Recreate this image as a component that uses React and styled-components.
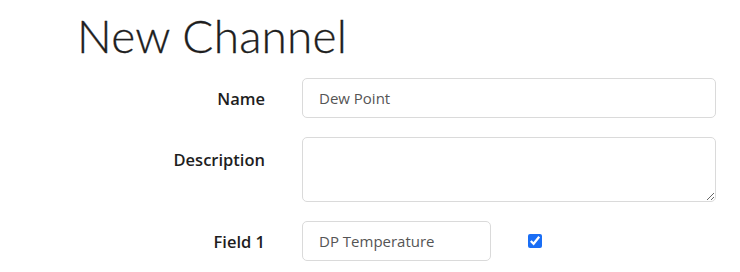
import React, { useState } from "react";
import styled, { createGlobalStyle } from "styled-components";

const GlobalStyle = createGlobalStyle`
  body {
    margin: 0;
    background: #ffffff;
    font-family: "Lato", "Liberation Sans", sans-serif;
    color: #212121;
  }
`;

const Page = styled.div`
  padding: 8px 0 0 0;
`;

const Title = styled.h1`
  margin: 0 0 0 77px;
  font-family: "Lato", sans-serif;
  font-weight: 300;
  font-size: 46px;
  line-height: 56px;
  color: #1e1e1e;
  letter-spacing: 0.2px;
  -webkit-text-stroke: 0.3px #1e1e1e;
`;

const Form = styled.form`
  display: grid;
  grid-template-columns: 265px 414px;
  column-gap: 37px;
  row-gap: 19px;
  margin-top: 14px;
`;

const Label = styled.label`
  text-align: right;
  font-family: "Open Sans", sans-serif;
  font-weight: 600;
  font-size: 16.5px;
  color: #1e1e1e;
  padding-top: ${(p) => (p.top ? "11px" : "0")};
  align-self: ${(p) => (p.top ? "start" : "center")};
`;

const Input = styled.input`
  box-sizing: border-box;
  width: ${(p) => p.w || "100%"};
  height: 40px;
  padding: 0 16px;
  border: 1px solid #dadada;
  border-radius: 5px;
  font-family: "Open Sans", sans-serif;
  font-size: 15px;
  color: #555;
  outline: none;
`;

const TextArea = styled.textarea`
  box-sizing: border-box;
  width: 100%;
  height: 65px;
  padding: 8px 16px;
  border: 1px solid #dadada;
  border-radius: 5px;
  font-family: "Open Sans", sans-serif;
  font-size: 15px;
  color: #555;
  outline: none;
  display: block;
`;

const FieldRow = styled.div`
  display: flex;
  align-items: center;
  gap: 37px;
`;

const Check = styled.input`
  width: 14px;
  height: 14px;
  margin: 0;
  accent-color: #1a6ef5;
`;

export default function App() {
  const [name, setName] = useState("Dew Point");
  const [desc, setDesc] = useState("");
  const [field1, setField1] = useState("DP Temperature");
  const [enabled, setEnabled] = useState(true);

  return (
    <Page>
      <GlobalStyle />
      <Title>New Channel</Title>
      <Form onSubmit={(e) => e.preventDefault()}>
        <Label htmlFor="name">Name</Label>
        <Input id="name" value={name} onChange={(e) => setName(e.target.value)} />

        <Label htmlFor="desc" top>Description</Label>
        <TextArea id="desc" value={desc} onChange={(e) => setDesc(e.target.value)} />

        <Label htmlFor="field1">Field 1</Label>
        <FieldRow>
          <Input id="field1" w="189px" value={field1} onChange={(e) => setField1(e.target.value)} />
          <Check type="checkbox" checked={enabled} onChange={(e) => setEnabled(e.target.checked)} />
        </FieldRow>
      </Form>
    </Page>
  );
}
